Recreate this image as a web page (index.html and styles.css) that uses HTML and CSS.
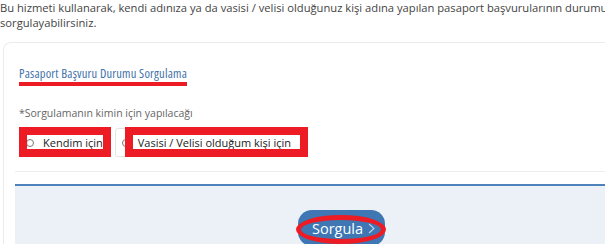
FILE: index.html
```html
<!DOCTYPE html>
<html lang="tr">
<head>
<meta charset="utf-8">
<link rel="stylesheet" href="styles.css">
</head>
<body>
<div class="page">
  <p class="intro">Bu hizmeti kullanarak, kendi adınıza ya da vasisi / velisi olduğunuz kişi adına yapılan pasaport başvurularının durumunu<br>sorgulayabilirsiniz.</p>
  <div class="card">
    <div class="form-body">
      <h2 class="title">Pasaport Başvuru Durumu Sorgulama</h2>
      <div class="field-label">*Sorgulamanın kimin için yapılacağı</div>
      <div class="options">
        <label class="option option-self"><span class="radio"></span><span class="opt-text">Kendim için</span></label>
        <label class="option option-ward"><span class="radio"></span><span class="opt-text">Vasisi / Velisi olduğum kişi için</span></label>
        <span class="mark mark-1"></span>
        <span class="mark mark-2"></span>
      </div>
    </div>
    <div class="footer">
      <button class="btn" type="button">Sorgula <svg class="chev" width="7" height="11" viewBox="0 0 7 11"><polyline points="1,1 6,5.5 1,10" fill="none" stroke="#c3d4ea" stroke-width="1.1"/></svg></button>
      <span class="ellipse"></span>
    </div>
  </div>
</div>
</body>
</html>
```
FILE: styles.css
```css
html, body {
  margin: 0;
  padding: 0;
  background: #ffffff;
  overflow: hidden;
}
body {
  font-family: "Open Sans", "Noto Sans", sans-serif;
  color: #444;
}
.page {
  width: 700px;
}
.intro {
  margin: 0;
  font-size: 11.2px;
  line-height: 15px;
  color: #444;
  white-space: nowrap;
}
.card {
  margin: 12px 0 0 3px;
  border: 1px solid #ececec;
  border-radius: 8px;
  border-right: none;
  padding-left: 11px;
  height: 220px;
}
.form-body {
  padding: 23px 0 14px 4px;
  border-bottom: 1px solid #eeeeee;
}
.title {
  width: fit-content;
  margin: 0;
  font-size: 12.5px;
  font-stretch: 87.5%;
  letter-spacing: 0.2px;
  font-weight: normal;
  line-height: 16px;
  color: #4272aa;
  border-bottom: 4px solid #ed1c24;
}
.field-label {
  margin-top: 20px;
  font-size: 10.5px;
  line-height: 14px;
  color: #666;
}
.options {
  position: relative;
  display: flex;
  gap: 6px;
  margin-top: 8px;
}
.option {
  display: flex;
  align-items: center;
  height: 27px;
  border: 1px solid #e4e4e4;
  border-radius: 3px;
  font-size: 11px;
  color: #222;
}
.option-self {
  gap: 9px;
  padding: 0 5px 0 6px;
}
.option-ward {
  gap: 8px;
  padding: 0 11px 0 6px;
}
.radio {
  width: 6px;
  height: 6px;
  border: 1px solid #777;
  border-radius: 50%;
}
.mark {
  position: absolute;
  box-sizing: border-box;
  border: 8px solid #ed1c24;
  top: -1px;
  height: 30px;
}
.mark-1 {
  left: 0;
  width: 92px;
}
.mark-2 {
  left: 106px;
  width: 183px;
}
.footer {
  position: relative;
  margin-top: 12px;
  border-top: 2px solid #4d82ba;
  background: #ecf1f8;
  height: 80px;
  padding: 24px 0 0 283px;
  box-sizing: border-box;
}
.btn {
  display: flex;
  align-items: center;
  justify-content: center;
  gap: 5px;
  width: 87px;
  height: 36px;
  border: none;
  border-radius: 14px;
  background: #3e77b3;
  color: #fff;
  font-family: "Open Sans", "Noto Sans", sans-serif;
  font-size: 14.5px;
  padding: 0 0 0 4px;
}
.chev {
  display: block;
}
.ellipse {
  position: absolute;
  left: 281px;
  top: 29px;
  width: 90px;
  height: 29px;
  box-sizing: border-box;
  border: 5px solid #ed1c24;
  border-radius: 50%;
}
```
